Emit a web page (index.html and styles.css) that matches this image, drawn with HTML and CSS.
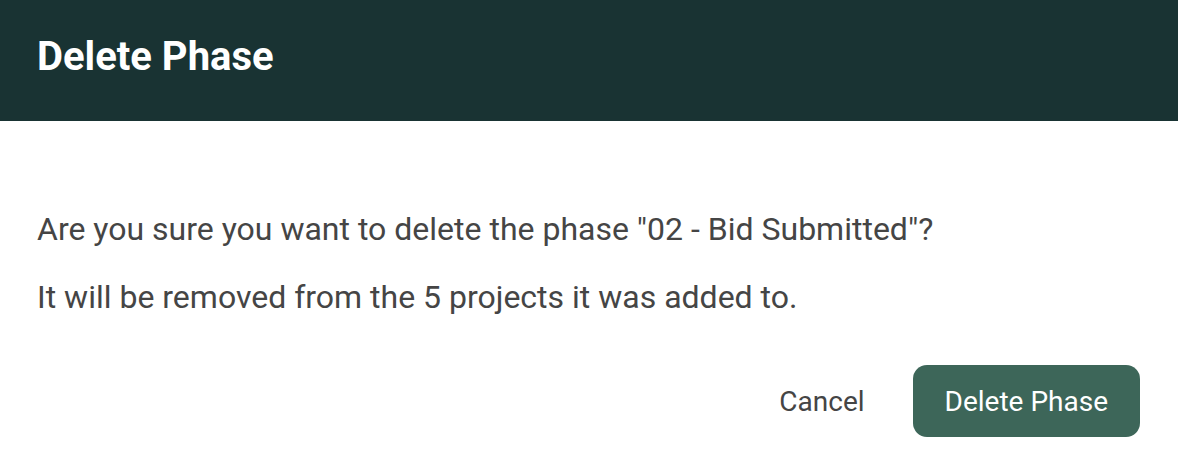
FILE: index.html
```html
<!DOCTYPE html>
<html lang="en">
<head>
  <meta charset="UTF-8" />
  <meta name="viewport" content="width=device-width, initial-scale=1.0" />
  <title>Delete Phase</title>
  <link rel="stylesheet" href="styles.css">
</head>
<body>
  <div class="dialog">
    <header class="dialog-header">
      <h2>Delete Phase</h2>
    </header>

    <div class="dialog-body">
      <p>Are you sure you want to delete the phase "02 - Bid Submitted"?</p>
      <p>It will be removed from the 5 projects it was added to.</p>
    </div>

    <div class="dialog-actions">
      <button class="cancel-btn">Cancel</button>
      <button class="delete-btn">Delete Phase</button>
    </div>
  </div>
</body>
</html>
```

FILE: styles.css
```css
body {
  font-family: Roboto, Arial, sans-serif;
  background-color: #ffffff;
  margin: 0;
  padding: 0;
}
.dialog {
  width: 1178px;
  height: 474px;
  background-color: white;
}
.dialog-header {
  background-color: #193333;
  height: 121px;
  padding: 0 37px 8px;
  display: flex;
  align-items: center;
  box-sizing: border-box;
}
.dialog-header h2 {
  margin: 0;
  color: white;
  font-size: 40px;
  font-weight: 700;
}
.dialog-body {
  padding: 88px 37px 0;
}
.dialog-body p {
  margin: 0 0 28px;
  font-size: 32px;
  color: #454545;
  line-height: 40px;
}
.dialog-actions {
  display: flex;
  justify-content: flex-end;
  align-items: center;
  gap: 16px;
  padding: 20px 38px 0;
}
.dialog-actions button {
  font-family: Roboto, Arial, sans-serif;
  font-size: 28px;
  border: none;
  cursor: pointer;
  height: 72px;
  padding: 0 32px;
  border-radius: 14px;
}
.cancel-btn {
  background: none;
  color: #454545;
}
.delete-btn {
  background-color: #3d6659;
  color: white;
}
```
